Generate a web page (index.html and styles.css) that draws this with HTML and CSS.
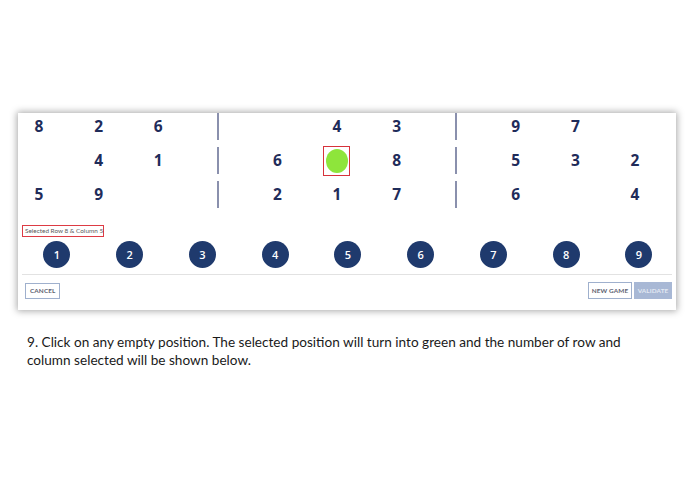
FILE: index.html
```html
<!DOCTYPE html>
<html>
<head>
<meta charset="utf-8">
<link rel="stylesheet" href="styles.css">
</head>
<body>
<div class="page">
  <div class="card">
    <div class="board">
      <div class="cell">8</div><div class="cell">2</div><div class="cell">6</div><div class="cell"><span class="bar"></span></div><div class="cell"></div><div class="cell">4</div><div class="cell">3</div><div class="cell"><span class="bar"></span></div><div class="cell">9</div><div class="cell">7</div><div class="cell"></div>
      <div class="cell"></div><div class="cell">4</div><div class="cell">1</div><div class="cell"><span class="bar"></span></div><div class="cell">6</div><div class="cell"><span class="sel"><span class="dot"></span></span></div><div class="cell">8</div><div class="cell"><span class="bar"></span></div><div class="cell">5</div><div class="cell">3</div><div class="cell">2</div>
      <div class="cell">5</div><div class="cell">9</div><div class="cell"></div><div class="cell"><span class="bar"></span></div><div class="cell">2</div><div class="cell">1</div><div class="cell">7</div><div class="cell"><span class="bar"></span></div><div class="cell">6</div><div class="cell"></div><div class="cell">4</div>
    </div>
    <div class="label">Selected Row 8 &amp; Column 5</div>
    <div class="picks">
      <div class="pick"><span class="num">1</span></div>
      <div class="pick"><span class="num">2</span></div>
      <div class="pick"><span class="num">3</span></div>
      <div class="pick"><span class="num">4</span></div>
      <div class="pick"><span class="num">5</span></div>
      <div class="pick"><span class="num">6</span></div>
      <div class="pick"><span class="num">7</span></div>
      <div class="pick"><span class="num">8</span></div>
      <div class="pick"><span class="num">9</span></div>
    </div>
    <div class="sep"></div>
    <div class="actions">
      <button class="btn">CANCEL</button>
      <div class="right">
        <button class="btn new">NEW GAME</button>
        <button class="btn validate">VALIDATE</button>
      </div>
    </div>
  </div>
  <p class="caption">9. Click on any empty position. The selected position will turn into green and the number of row and column selected will be shown below.</p>
</div>
</body>
</html>
```
FILE: styles.css
```css
html, body {
  margin: 0;
  padding: 0;
  background: #ffffff;
}
.page {
  padding-top: 113px;
  padding-left: 18px;
}
.card {
  width: 658px;
  height: 197px;
  background: #ffffff;
  box-shadow: 0 0 7px 1px rgba(0, 0, 0, 0.35);
  box-sizing: border-box;
  display: flex;
  flex-direction: column;
}
.board {
  display: grid;
  grid-template-columns: repeat(10, 59.6px) 10px;
  grid-template-rows: repeat(3, 27px);
  row-gap: 7px;
  padding-left: 16px;
}
.cell {
  width: 10px;
  display: flex;
  align-items: center;
  justify-content: center;
  font-family: "Open Sans", sans-serif;
  font-weight: 700;
  font-size: 15.5px;
  color: #1f2c5a;
  line-height: 1;
}
.bar {
  display: block;
  width: 2px;
  height: 27px;
  background: #8a90ad;
  flex-shrink: 0;
}
.sel {
  flex-shrink: 0;
  width: 27px;
  height: 30px;
  box-sizing: border-box;
  border: 1.5px solid #d7323b;
  display: flex;
  align-items: center;
  justify-content: center;
}
.dot {
  display: block;
  width: 22px;
  height: 24px;
  border-radius: 50%;
  background: #8ee53b;
}
.label {
  align-self: flex-start;
  margin-top: 17px;
  margin-left: 4px;
  width: 82px;
  height: 12px;
  box-sizing: border-box;
  border: 1px solid #dd3b44;
  font-family: "Lato", sans-serif;
  font-size: 6.4px;
  color: #5a5a5a;
  line-height: 10px;
  padding-left: 2px;
  white-space: nowrap;
}
.picks {
  display: grid;
  grid-template-columns: repeat(9, 72.75px);
  margin-top: 4px;
  margin-left: 2.5px;
}
.pick {
  display: flex;
  justify-content: center;
}
.num {
  width: 27px;
  height: 27px;
  border-radius: 50%;
  background: #1f3a6d;
  color: #ffffff;
  font-family: "Open Sans", sans-serif;
  font-size: 11px;
  font-weight: 600;
  display: flex;
  align-items: center;
  justify-content: center;
}
.sep {
  margin: 6px 4px 0 4px;
  height: 1px;
  background: #e2e2e2;
}
.actions {
  display: flex;
  justify-content: space-between;
  align-items: center;
  margin-top: 7px;
  padding-left: 7px;
  padding-right: 4px;
}
.right {
  display: flex;
  gap: 2px;
}
.btn {
  margin: 0;
  height: 16px;
  padding: 0 4px;
  border: 1px solid #9fb0cd;
  background: #ffffff;
  font-family: "Lato", sans-serif;
  font-size: 6.4px;
  font-weight: 700;
  color: #5d6170;
  letter-spacing: 0.1px;
  line-height: 14px;
  white-space: nowrap;
}
.btn.new {
  width: 44px;
  height: 17px;
  padding: 0;
}
.btn.validate {
  width: 38px;
  height: 17px;
  padding: 0;
  background: #a8b8d5;
  border-color: #a8b8d5;
  color: #e3e9f3;
}
.caption {
  margin: 23px 0 0 9px;
  width: 600px;
  font-family: "Lato", sans-serif;
  font-size: 13.6px;
  line-height: 18px;
  color: #1a1a1a;
}
```
